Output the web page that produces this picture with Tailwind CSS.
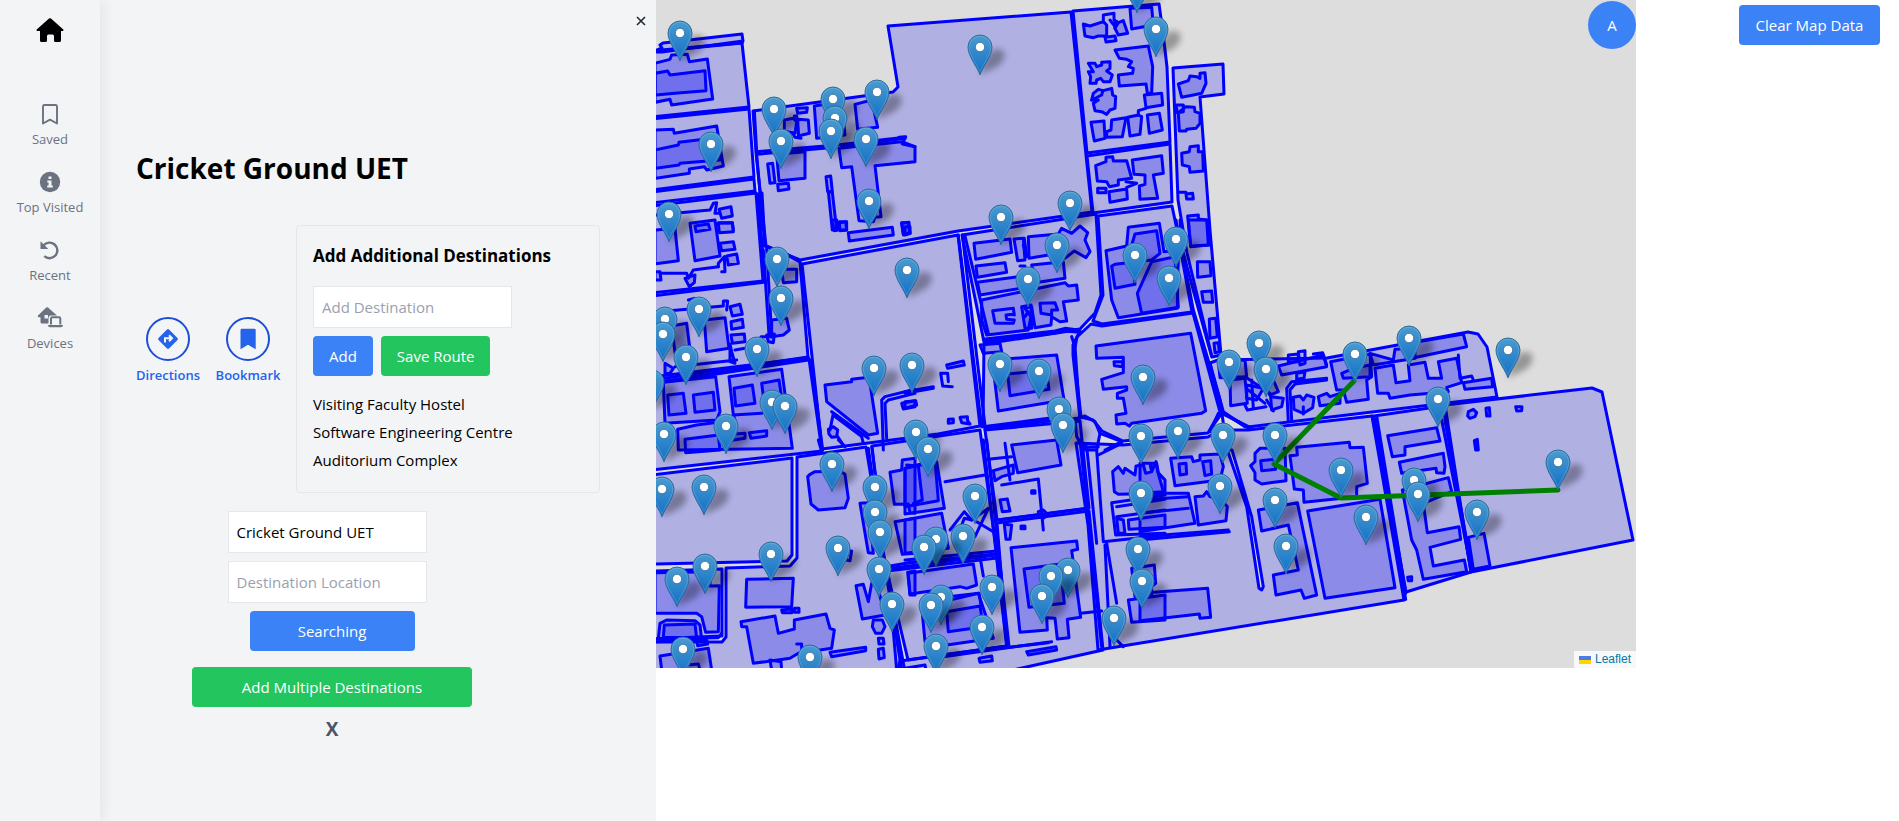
<!DOCTYPE html>
<html lang="en">
<head>
<meta charset="utf-8">
<title>Campus Map</title>
<script src="https://cdn.jsdelivr.net/npm/@tailwindcss/browser@4"></script>
</head>
<body class="bg-white text-black text-[15px] leading-6 font-['Open_Sans','Noto_Sans',sans-serif]">
<div class="flex min-h-screen items-stretch">
  <nav class="relative z-10 flex w-[100px] shrink-0 flex-col items-center bg-gray-100 pt-4 text-[13px] leading-5 text-[#6b7280] shadow-[4px_0_12px_rgba(0,0,0,0.06)]">
    <a href="#" aria-label="Home" class="text-black"><svg class="h-7 w-7" viewBox="0 0 28 28" fill="currentColor"><path d="M13 2.600Q14 1.800 15 2.600L27.300 13.500Q28 14.300 27 15H25V24.500Q25 26 23.500 26H19.500Q18 26 18 24.500V20Q18 18.500 16.500 18.500H12.500Q11 18.500 11 20V24.500Q11 26 9.500 26H5.500Q4 26 4 24.500V15H1Q0 14.300.700 13.500Z"/></svg></a>
    <div class="flex flex-col items-center gap-[21px] pt-[58px]">
      <a href="#" class="flex flex-col items-center gap-[3px]"><svg class="h-6 w-6" viewBox="0 0 24 24" fill="none" stroke="currentColor" stroke-width="1.900" stroke-linejoin="round"><path d="M5 4.500Q5 3 6.500 3H17.500Q19 3 19 4.500V21.500L12 17.700L5 21.500Z"/></svg>Saved</a>
      <a href="#" class="flex flex-col items-center gap-[3px]"><svg class="h-6 w-6" viewBox="0 0 24 24"><circle cx="12" cy="12" r="10.200" fill="currentColor"/><path d="M10.500 6.500h3v2.600h-3zM9.300 10.500h4.200v5h1.300v2H9.200v-2h1.400v-3H9.300z" fill="#f3f4f6"/></svg>Top Visited</a>
      <a href="#" class="flex flex-col items-center gap-[3px]"><svg class="h-6 w-6" viewBox="0 0 24 24"><path d="M5.500 7.500A7.800 7.800 0 1 1 6.300 18.200" fill="none" stroke="currentColor" stroke-width="2.400"/><path d="M2.500 3.200V11H10.300Z" fill="currentColor"/></svg>Recent</a>
      <a href="#" class="flex flex-col items-center gap-[3px]"><svg class="h-6 w-7" viewBox="0 0 28 24"><path d="M10.300 1.500Q11.200.900 12 1.500L21 9.500H15Q12.500 9.500 12.500 12V17.500H6Q4.500 17.500 4.500 16V11.300H2.300Q1.200 10.800 2 9.600Z" fill="currentColor"/><path d="M8.500 9h3.500v3.500H8.500z" fill="#f3f4f6"/><path d="M15 18.500V12.500Q15 11.200 16.300 11.200H23Q24.300 11.200 24.300 12.500V18.500" fill="none" stroke="currentColor" stroke-width="2"/><path d="M12 19H27Q27 21.300 25 21.300H14Q12 21.300 12 19Z" fill="currentColor"/></svg>Devices</a>
    </div>
  </nav>

  <section class="flex w-[556px] shrink-0 flex-col bg-gray-100">
    <div class="flex justify-end pr-[3px] pt-2"><button type="button" aria-label="Close panel" class="p-1 text-gray-800"><svg class="h-4 w-4" viewBox="0 0 16 16" stroke="currentColor" stroke-width="1.600"><path d="M4 5L12 13M12 5L4 13"/></svg></button></div>
    <h1 class="pl-9 pt-[118px] text-[28px] font-bold leading-9">Cricket Ground UET</h1>
    <div class="flex items-center gap-4 pl-9 pr-14 pt-[39px]">
      <button type="button" class="flex w-16 flex-col items-center gap-1 pb-4 text-[13px] font-semibold leading-5 text-[#2563eb]">
        <span class="flex h-11 w-11 items-center justify-center rounded-full border-2 border-[#1d4ed8]"><svg class="h-6 w-6" viewBox="0 0 24 24"><path d="M11 2.500Q12 1.600 13 2.500L21.500 11Q22.400 12 21.500 13L13 21.500Q12 22.400 11 21.500L2.500 13Q1.600 12 2.500 11Z" fill="currentColor"/><path d="M9 15.500V11.300H15.500M13 8.300L16 11.300L13 14.300" fill="none" stroke="#f3f4f6" stroke-width="2"/></svg></span>Directions</button>
      <button type="button" class="flex w-16 flex-col items-center gap-1 pb-4 text-[13px] font-semibold leading-5 text-[#2563eb]">
        <span class="flex h-11 w-11 items-center justify-center rounded-full border-2 border-[#1d4ed8]"><svg class="h-6 w-6" viewBox="0 0 24 24" fill="currentColor"><path d="M4.500 3Q4.500 1.700 6 1.700H18.300Q19.700 1.700 19.700 3V22.200L12 17.800L4.500 22.200Z"/></svg></span>Bookmark</button>
      <div class="flex-1 rounded border border-gray-200 p-4">
        <h2 class="mb-4 whitespace-nowrap text-[17px] font-bold leading-7">Add Additional Destinations</h2>
        <input type="text" aria-label="Add Destination" placeholder="Add Destination" class="block w-[199px] border border-gray-200 bg-white p-2 placeholder:text-gray-400">
        <div class="mt-2 flex gap-2">
          <button type="button" class="rounded bg-[#3b82f6] px-4 py-2 text-white">Add</button>
          <button type="button" class="whitespace-nowrap rounded bg-[#22c55e] px-4 py-2 text-white">Save Route</button>
        </div>
        <ul class="mt-4"><li class="mb-1">Visiting Faculty Hostel</li><li class="mb-1">Software Engineering Centre</li><li class="mb-1">Auditorium Complex</li></ul>
      </div>
    </div>
    <form class="ml-[92px] flex w-[280px] flex-col items-center pt-[18px]">
      <div class="mr-[10px] flex flex-col gap-2">
        <input type="text" aria-label="Starting Location" value="Cricket Ground UET" class="w-[199px] border border-gray-200 bg-white p-2">
        <input type="text" aria-label="Destination Location" placeholder="Destination Location" class="w-[199px] border border-gray-200 bg-white p-2 placeholder:text-gray-400">
      </div>
      <button type="button" class="mt-2 w-[165px] rounded bg-[#3b82f6] py-2 text-white">Searching</button>
      <button type="button" class="mt-4 w-full rounded bg-[#22c55e] py-2 text-white">Add Multiple Destinations</button>
      <button type="button" class="mt-2 px-2 text-[19px] font-bold leading-7 text-gray-600">X</button>
    </form>
  </section>

  <main class="relative h-[668px] min-w-0 flex-1 overflow-hidden bg-[#ddd]">
    <svg id="map" class="block h-full w-full" viewBox="0 0 980 668" preserveAspectRatio="xMinYMin slice" role="img" aria-label="Campus map">
      <defs>
        <linearGradient id="pinFill" x1="0" y1="0" x2="0" y2="1"><stop offset="0" stop-color="#4a9bd0"/><stop offset="1" stop-color="#126fc6"/></linearGradient>
        <filter id="soft" x="-50%" y="-50%" width="200%" height="200%"><feGaussianBlur stdDeviation="3"/></filter>
        <g id="pin">
          <path d="M0 28C3 14 8 3 17 2C27 2 27 12 18 19Z" fill="#000" opacity=".32" filter="url(#soft)"/>
          <path d="M0 27.800C-2 21-12 9.500-12 0A12 12 0 0 1 12 0C12 9.500 2 21 0 27.800Z" fill="url(#pinFill)" stroke="#2e6c97" stroke-width="1"/>
          <path d="M0 24.500C-3 17-10.800 8.500-10.800 0A10.800 10.800 0 0 1 10.800 0C10.800 8.500 3 17 0 24.500Z" fill="none" stroke="#fff" stroke-opacity=".15"/>
          <circle r="4.700" fill="#fff" stroke="#2e6c97" stroke-width=".8"/>
        </g>
      </defs>
      <g id="areas" fill="#00f" fill-opacity=".2" stroke="#00f" stroke-width="9" stroke-linejoin="round" stroke-linecap="round"></g>
      <path d="M698 381L618 464L685 498L902 490" fill="none" stroke="#008000" stroke-width="5" stroke-linejoin="round" stroke-linecap="round"/>
      <g id="pins"></g>
    </svg>
    <button type="button" class="absolute right-0 top-px h-12 w-12 rounded-full bg-[#3b82f6] text-white">A</button>
    <div class="absolute bottom-0 right-0 flex items-center gap-1 bg-white/80 px-[5px] font-['Liberation_Sans',sans-serif] text-[12px] leading-[17px] text-[#0078a8]">
      <svg class="h-2 w-3" viewBox="0 0 12 8"><path fill="#4c7be1" d="M0 0h12v4H0z"/><path fill="#ffd500" d="M0 4h12v4H0z"/></svg><a href="#">Leaflet</a>
    </div>
  </main>

  <aside class="flex w-[263px] shrink-0 items-start justify-end pr-[19px] pt-[5px]">
    <button type="button" class="w-[141px] whitespace-nowrap rounded bg-[#3b82f6] py-2 text-white">Clear Map Data</button>
  </aside>
</div>
<script>
const NS = 'http://www.w3.org/2000/svg';

// Campus blocks in map pixels.
const blocks = [
  '-4,52 86,43 93,107 -4,117', '6,48 4,45 7,43 86,34 87,41 6,52 -4,52',
  '-4,119 93,109 98,177 -4,190', '-4,192 98,179 99,191 -4,203',
  '-4,206 100,193 107,281 -4,293', '-4,296 109,282 102,194 106,193 109,246 133,256 144,262 152,357 -4,380',
  '-4,383 153,359 166,451 -4,470',
  '97,111 237,92 242,87 232,26 415,12 436,212 302,231 144,260 110,246 100,153',
  '146,264 302,235 324,426 282,434 166,449',
  '306,235 440,214 445,295 439,313 424,329 328,342',
  '328,344 420,330 424,331 417,345 417,355 424,418 327,427',
  '417,11 503,4 507,33 511,67 514,142 431,153', '431,156 514,144 516,202 437,213',
  '442,216 516,206 520,225 536,312 446,324 437,321 447,295',
  '517,68 567,64 568,94 544,97 554,230 565,355 556,357 531,253 522,200',
  '435,324 446,326 537,313 564,412 552,433 467,441 446,431 437,420 425,417 418,353 421,337',
  '554,363 562,360 671,358 812,332 822,334 831,347 841,397 592,427 566,412',
  '592,430 716,416 748,600 442,650 432,525 420,443 467,445 552,437 564,430',
  '718,416 787,406 815,572 750,592', '789,405 936,388 946,392 977,540 815,572',
  '-4,475 136,458 136,555 131,561 -4,564',
  '141,457 210,447 232,580 249,672 -4,672 -4,642 66,642 70,637 70,568 134,566 141,558',
  '216,446 324,430 341,555 229,569', '-4,571 66,569 66,636 -4,639',
  '231,571 341,558 351,646 252,660', '329,430 424,421 433,508 341,520',
  '341,523 433,511 447,650 330,676 240,676 244,661 351,646'
];

// Buildings and paths: sheets are drawn at three units per map pixel.
// A leading "~" marks an open line, a leading "=" a road gap between blocks.
const sheets = [
 [-1,0,['0,190 45,178 50,165 97,163 103,185 157,177 173,297 50,315 45,298 0,307','0,220 38,213 45,225 150,212 153,272 60,280 0,285',
  '0,390 55,388 58,400 185,378 205,498 155,510 148,500 103,507 103,520 0,535','0,450 70,435 72,427 185,413 195,480 75,490 72,495 0,505',
  '425,325 457,323 455,337 428,340','388,360 415,355 425,365 420,400 388,395','428,358 460,360 463,400 430,408','~418,348 425,348 430,400','~395,395 412,398 420,412 438,415','478,318 515,312 565,350 570,405 485,415','600,313 650,300 668,382 608,388',
  '~298,333 305,455 545,435 750,412','560,440 750,415','305,463 540,442','~732,412 752,410 742,432 780,440','552,445 740,425 780,440 780,485 660,497 678,650 660,652 655,665 612,662 590,500 560,503','365,463 450,455 450,535 372,542',
  '338,492 353,490 360,548 345,550','368,553 400,550 402,567 370,572','513,530 527,528 532,575 518,575','520,575 532,577 545,690 532,690','305,465 325,690','740,668 760,668 765,700 745,700','553,668 575,665 575,690 553,690',
  '~0,645 165,630 175,610 185,608 180,640 195,640','192,628 228,620 232,648 200,655','190,668 232,668 235,690','0,155 20,150 262,128']],
 [404,0,['70,72 90,78 130,65 140,75 140,108 115,108 100,113 75,108','~130,60 130,45 162,40 162,60 175,68 165,85','165,62 175,68 190,62 203,100 175,105 165,85','135,112 165,108 168,122 138,126','210,25 275,22 280,75 215,87','150,60 165,80',
  '165,150 265,138 278,200 275,280 262,280 258,252 178,258 175,225 218,220 220,205 205,200 215,185 200,178 178,175','85,190 105,190 110,200 125,195 125,187 150,185 150,205 140,213 157,225 150,245 130,245 122,235 110,240 108,250 90,250 92,230 85,215 100,215','100,280 115,268 130,272 155,265 158,285 167,290 165,325 150,330 140,343 125,335 105,332 100,310 115,300 95,300','95,300 125,285 128,275',
  '253,285 305,280 308,315 258,323','93,367 132,363 135,415 103,423 98,395','140,395 153,390 155,360 198,353 187,410 140,412','203,352 235,345 245,350 240,403 210,408','262,345 298,340 307,390 268,400','~235,345 235,332 258,325',
  '107,497 138,485 138,472 158,470 160,483 200,482 215,535 175,540 175,555 148,560 140,545 112,543','217,480 305,467 310,520 280,525 293,595 240,598 238,558 255,553 255,525 222,523','113,565 138,565 138,578 113,578','147,575 200,567 202,597 150,607','198,545 230,550 200,562',
  '355,252 385,242 390,228 410,230 420,235 420,220 435,218 438,250 425,280 400,285 365,292','348,315 370,315 370,335 352,338','355,338 378,320 403,322 405,335 420,340 420,370 408,385 380,388 378,393 358,393','365,460 388,455 390,440 415,437 415,455 428,455 430,513 390,517 388,500 367,495','378,582 398,580 400,597 380,597','355,577 378,577','383,648 415,645 415,657 440,660 445,735 392,740']],
 [-1,220,['0,30 60,25 70,122 0,132','105,10 180,0 195,108 120,122','120,18 160,12 165,28 123,35','190,10 232,8 235,35 193,38','195,70 235,65 240,88 200,92','215,108 245,102 250,130 220,135','~190,140 190,130 208,110 210,155 200,155','0,155 15,155 18,180 0,180','~15,160 95,160 100,175 115,150 190,140','90,175 120,165 118,188 103,200 95,185',
  '~45,272 205,258 205,243 218,243 215,270','100,240 118,235','50,318 95,310 105,390 60,398','148,300 210,293 222,385 155,395','225,260 255,253 262,283 232,288','228,305 262,298 265,322 230,328','228,345 268,342 270,365 232,370','240,390 270,385','225,372 230,395 240,430 225,425','30,430 55,445 45,460 30,462','60,440 245,420',
  '325,75 400,105 435,125','335,85 350,345','325,90 342,345','380,148 425,148 425,185 385,188','350,300 395,295 403,330 385,345 350,350','335,345 358,342 355,368 340,365','318,350 350,350',
  '25,487 182,470 195,575 185,600 30,610','38,525 85,520 93,580 42,585','115,525 175,517 180,570 120,577','222,470 380,448 412,685 70,690 68,628 125,615 240,600 235,585','235,585 320,580','237,505 292,495 300,550 242,558','320,490 372,480 378,520 325,528','90,658 190,645 195,690 92,698','195,645 270,640 270,655 200,665','283,638 335,632 335,648 288,655',
  '510,495 590,485 590,478 642,472 668,640 640,645 515,545','530,575 640,655','535,580 525,630','540,590 620,650 625,670','~685,690 680,540 690,530 780,508','~695,655 690,550 700,540 780,520','520,628 535,620 548,630 545,650 530,652 522,642','548,650 565,675','740,550 780,542 780,560 745,567',
  '580,38 712,22 715,45 583,63','530,0 545,0 548,30 538,32','553,5 572,5 575,30 555,32','740,10 762,7 765,40 745,45','0,470 460,413','0,490 460,420','468,420 503,690']],
 [249,220,['207,70 315,57 320,97 212,118','327,57 355,55 360,120 338,122','355,75 365,110 358,55','370,50 460,42 470,25 500,40 525,18 548,38 540,60 555,95 543,113 508,93 480,115 430,105 372,115','213,138 300,128 305,157 217,172','345,138 360,138','380,135 475,125 480,175 390,188','217,187 340,170 345,205 225,225','230,240 480,188 490,198 515,195 520,240 475,245 485,303 465,305 440,290 438,315 390,323 380,260 360,265 378,290 370,330 245,345 230,300','~328,285 325,265 263,272 270,310 325,310 328,300 305,298 303,285 325,283','405,250 450,248 458,270 440,270 440,285 408,280','350,260 378,255 380,325 360,325','370,275 360,290',
  '225,375 285,370 290,395 235,400','262,420 455,405 477,540 280,573','308,462 425,450 432,508 315,527','~142,500 113,498 107,460 128,460 130,485','125,435 175,423 178,435 128,445','130,598 145,597 145,608 130,610','165,592 187,590 188,603 195,612 170,608','0,515 85,500','0,520 85,505','0,545 32,542 35,555 0,565',
  '172,45 240,618','160,45 230,620','180,48 250,340','~235,358 450,333 480,325 520,330','~240,364 450,339 480,333 515,336','235,620 430,595','240,628 430,603','500,350 510,380 525,595','510,598 540,588 570,605 585,640 575,690 540,690 515,650','585,640 650,665 600,690','0,20 15,20 15,40 0,45']],
 [404,220,['138,92 200,78 205,22 298,10 312,95 355,90 352,265 175,293 155,240','215,75 225,42 290,32 300,100 275,120 165,133 155,138 165,205 225,193','232,220 275,125 345,110 355,262 245,280','385,0 445,0 450,75 392,78','412,125 450,125 453,167 413,172','425,215 455,213 458,247 430,247','448,297 467,295 472,350 450,355','462,370 475,368 478,395 465,398','~348,0 400,270 480,540 490,610','~360,0 365,80 405,230 455,410',
  '108,378 392,340 437,572 425,580 215,610 208,618 195,610 170,612 168,585 198,580 190,535 172,535 172,520 200,510 200,500 130,508 125,478 190,458 190,412 110,415','162,425 188,425 188,440 163,437','~450,430 475,520 490,575 555,620','485,580 570,622','475,580 450,635']],
 [-1,440,['465,103 480,95 555,93 570,103 580,175 570,203 490,210 468,192 458,110','275,418 415,415 410,500 272,502','380,510 410,507 410,518 382,518','418,505 432,505 432,517 418,517','258,545 360,528 370,580 418,567 418,540 513,522 525,565 538,570 530,625 430,640 405,655 295,670 275,560 260,560','525,637 632,622 632,632 530,650','345,660 378,665 380,690 350,690','425,612 440,612 440,640','603,437 625,433 640,485 650,430 665,430 690,525 622,537','655,540 682,540 690,560 680,580 662,580 652,560','670,595 685,595 687,612 672,612','670,628 685,625 688,653 672,657','690,380 740,690','700,400 725,690','640,25 655,130','650,20 665,130','615,190 640,188 655,340 640,338','580,333 590,333 585,362 572,360','705,97 740,90 742,60 780,55 780,220 765,218 760,192 718,193','720,245 780,235 780,340 742,343','758,397 780,393 780,465 765,465','705,378 780,365','0,398 165,395 165,438 193,437 190,575 152,577 140,530 125,520 0,520','10,595 15,550 35,540 120,542 135,555 140,598','25,592 28,555 120,552 125,595','0,605 150,600','0,597 190,593 200,580','125,603 155,600 158,612 128,617','15,648 160,625 170,690 20,690','75,677 130,672 135,690','490,0 500,35','550,0 570,20']],
 [249,440,['0,85 95,65 118,205 0,222','~5,75 40,78 52,180 25,190','0,85 90,60 100,182 0,200','120,125 240,105','~135,270 178,215 200,240 178,235 170,255','200,240 250,205 210,290','215,245 265,275','0,240 110,220 130,325 0,340','0,360 275,333','0,370 270,342','10,400 205,372 215,435 185,445 165,440 15,462','50,500 220,460 265,595 90,620 60,605','125,515 225,498 235,560 130,575','90,475 222,460 228,495','225,350 235,408','222,655 260,648 262,662 225,667','115,650 440,605','115,645 430,608','365,635 453,620 455,630 370,645','0,685 60,675 65,700','235,0 305,620','245,0 312,620','300,10 315,120','250,58 320,50','265,92 325,75 325,100 290,110 270,122','~290,135 400,117 415,270','285,180 307,177 315,213 292,215','380,152 390,152 390,160 380,160','348,258 360,258 360,266 348,266','298,253 320,255 315,298 303,298','280,240 550,205','400,215 415,210 428,223 415,235 402,230','320,15 455,0 468,75 338,98','318,323 515,303 518,328 500,332 527,532 487,538 492,593 457,597 450,535 425,533 427,570 345,577','357,387 465,372 478,490 372,502','527,520 590,513','525,0 590,620','545,20 575,310','~575,30 595,305 780,285','605,310 635,490','600,315 615,620','623,95 640,80 655,100 660,85 690,105 693,78 715,75 722,100 740,95 738,70 755,70 760,98 780,120 780,160 640,163 628,155','~780,165 620,188 632,285 780,280','635,200 780,178','635,230 780,210','635,235 655,240 660,280 640,280','670,240 780,225 780,262 672,268','680,385 748,375 752,430 740,440 740,465 690,470','670,480 780,465 780,540 680,547','635,600 655,620','520,0 545,22 580,20','580,45 650,10']],
 [484,310,['=262,420 320,590 357,835 365,840 370,830 335,620 276,420','235,155 315,150 320,200 240,203','270,210 315,205 322,280 272,287','~315,285 322,300 378,290','315,200 390,250','320,225 370,235 350,270 320,265','360,215 400,210 415,245 390,255','325,240 375,280','335,210 340,295','~380,270 400,303','392,260 430,265 425,290 395,300','415,168 550,135 560,170 425,195','445,135 475,132 475,155 445,155','475,125 495,122 495,160 480,165','520,132 548,128 560,165','470,190 495,185 492,205 470,208','~445,335 440,235 455,215 560,205','~455,330 450,240 465,222 560,210','460,262 480,258 490,270 500,255 522,262 518,293 490,310 462,298','535,260 560,250 570,260 600,250 600,280 540,287','490,290 490,312','572,155 690,132 695,200 680,210 685,268 620,277 610,240 590,240','605,190 640,175 690,165 690,200 610,205','690,130 760,150 765,118 825,115 825,145 700,165','835,95 970,72 980,110 800,148','705,175 760,165 768,218 810,212 805,165 855,157 865,205 905,205 895,155 950,145 965,218 920,232 925,245 810,255 750,265 745,250 713,250','~955,135 960,205 995,198 1000,210','970,218 1055,205 1058,230 975,238',
  '985,305 1000,298 1010,308 1005,320 990,325 983,318','1038,295 1048,293 1050,318 1040,318','1127,290 1146,290 1145,302 1130,303','1003,392 1012,388 1015,420 1007,420','743,377 890,353 900,393 795,410 795,435 757,440','778,457 910,430 915,470 912,490 890,488 888,475 785,490','787,540 925,503 935,545 850,580 862,668 957,650 962,688 870,712 880,768 973,750 980,785 850,808 830,720 815,690','985,682 1032,670 1050,768 1000,778','803,802 815,800 815,812 805,812','697,318 797,868','710,318 797,850','905,330 995,785','915,330 995,775',
  '470,412 628,397 630,413 670,412 682,520 650,530 650,560 492,577 490,540 463,537 450,437 472,435','345,430 360,415 435,415 438,512 365,522 345,510 345,488 332,467 345,455','362,452 405,448 407,478 365,482','355,600 472,578 530,855 493,865 483,840 408,855 400,795 475,780 445,645 365,663','503,603 720,568 765,833 555,865','92,445 155,440 160,455 180,450 180,435 240,432 250,470 240,510 105,527','117,462 138,460 140,492 120,495','188,455 212,452 215,492 195,497','0,550 145,550 165,640 0,665','0,570 145,560','0,610 145,595','165,560 190,558 200,545 210,560 245,570 262,590 258,632 175,645','0,680 265,660','0,690 268,665','0,460 30,460 35,485 48,455 52,480 70,545 0,550','0,850 203,835 212,922 180,925 178,912 0,932','250,310 325,355','210,360 245,310']]
];

const areas = document.getElementById('areas');
function drawArea(points, parent) {
  const mark = points[0];
  if (mark === '~' || mark === '=') points = points.slice(1);
  const open = mark === '~' || points.split(' ').length < 4;
  const el = document.createElementNS(NS, open ? 'polyline' : 'polygon');
  el.setAttribute('points', points);
  if (open) el.setAttribute('fill', 'none');
  if (mark === '=') { el.setAttribute('fill', '#ddd'); el.setAttribute('fill-opacity', '1'); }
  parent.appendChild(el);
}
const base = document.createElementNS(NS, 'g');
base.setAttribute('stroke-width', '3');
areas.appendChild(base);
blocks.forEach(p => drawArea(p, base));
sheets.forEach(([x, y, shapes]) => {
  const g = document.createElementNS(NS, 'g');
  g.setAttribute('transform', `translate(${x} ${y}) scale(.33333)`);
  areas.appendChild(g);
  shapes.forEach(p => drawArea(p, g));
});

// Places: pin heads, grouped by sheet.
const places = [
 [-1,0,'73,99 357,327 532,297 664,276 538,353 526,393 376,423 631,417 166,432 640,603 40,641'],
 [249,0,'223,141 751,87 493,608 286,651 695,-46'],
 [-1,220,'364,117 755,150 376,234 130,267 28,297 22,342 304,387 91,411 655,444 771,435 -9,487 349,546 388,558 211,618 25,641'],
 [249,220,'454,75 367,177 688,105 283,432 400,453 460,567 472,615 712,471 31,636 67,687 706,648'],
 [404,220,'346,57 325,174 505,426 595,369 616,447 352,633 487,645 643,645'],
 [-1,440,'529,72 658,141 19,147 145,141 658,216 673,276 547,324 346,342 148,378 64,417 670,387 709,492 82,627 463,651'],
 [249,440,'208,168 172,288 91,297 55,321 259,441 106,471 76,495 229,561 91,618 487,390 436,408 409,468 706,159 697,327 709,423 625,534'],
 [484,310,'643,132 805,84 1102,120 892,267 601,480 1252,456 820,510 832,552 1009,606 676,621 403,570 436,708 238,528']
];
places.flatMap(([x, y, list]) => list.split(' ').map(p => p.split(',').map(Number)).map(([a, b]) => [x + a / 3, y + b / 3]))
  .sort((a, b) => a[1] - b[1])
  .forEach(([x, y]) => {
    const use = document.createElementNS(NS, 'use');
    use.setAttribute('href', '#pin');
    use.setAttribute('x', Math.ceil(x));
    use.setAttribute('y', Math.round(y));
    document.getElementById('pins').appendChild(use);
  });
</script>
</body>
</html>
